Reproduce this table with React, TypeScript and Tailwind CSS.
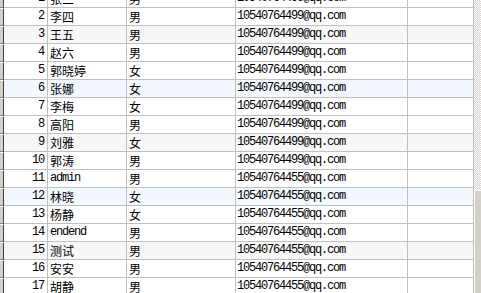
import React from "react";

const rows: [number, string, string, string][] = [
  [1, "张三", "男", "10540764499@qq.com"],
  [2, "李四", "男", "10540764499@qq.com"],
  [3, "王五", "男", "10540764499@qq.com"],
  [4, "赵六", "男", "10540764499@qq.com"],
  [5, "郭晓婷", "女", "10540764499@qq.com"],
  [6, "张娜", "女", "10540764499@qq.com"],
  [7, "李梅", "女", "10540764499@qq.com"],
  [8, "高阳", "男", "10540764499@qq.com"],
  [9, "刘雅", "女", "10540764499@qq.com"],
  [10, "郭涛", "男", "10540764499@qq.com"],
  [11, "admin", "男", "10540764455@qq.com"],
  [12, "林晓", "女", "10540764455@qq.com"],
  [13, "杨静", "女", "10540764455@qq.com"],
  [14, "endend", "男", "10540764455@qq.com"],
  [15, "测试", "男", "10540764455@qq.com"],
  [16, "安安", "男", "10540764455@qq.com"],
  [17, "胡静", "男", "10540764455@qq.com"],
];

const cjk = "font-['Noto_Sans_CJK_SC',sans-serif]";
const mono = "font-['Liberation_Mono','DejaVu_Sans_Mono',monospace]";

function rowBg(n: number) {
  if (n % 6 === 3) return "bg-[#f7f7f7]";
  if (n % 6 === 0) return "bg-[#f2f8fe]";
  return "bg-white";
}

export default function App() {
  return (
    <div className="w-[481px] h-[293px] overflow-hidden bg-white flex text-black">
      <div className="flex-1 flex flex-col -mt-[10px]">
        {rows.map(([n, name, sex, email]) => {
          const ascii = /^[a-z]+$/.test(name);
          return (
            <div key={n} className={`flex h-[18px] shrink-0 ${rowBg(n)}`}>
              <div className="w-[4px] h-[18px] bg-[#d4d0c8] border-t border-t-white border-b border-b-[#808080] border-r border-r-[#404040]" />
              <div className={`w-[44px] h-[18px] border-r border-b border-[#c0c0c0] text-right pr-[3px] text-[12px] leading-[17px] tracking-[-1.2px] ${mono}`}>
                {n}
              </div>
              <div
                className={`w-[79px] h-[18px] border-r border-b border-[#c0c0c0] pl-[2px] leading-[17px] ${
                  ascii ? `text-[12px] tracking-[-1.2px] ${mono}` : `text-[12px] ${cjk}`
                }`}
              >
                {name}
              </div>
              <div className={`w-[109px] h-[18px] border-r border-b border-[#c0c0c0] pl-[2px] text-[12px] leading-[17px] ${cjk}`}>
                {sex}
              </div>
              <div className={`w-[172px] h-[18px] border-r border-b border-[#c0c0c0] pl-[1px] text-[12px] leading-[17px] tracking-[-1.2px] ${mono}`}>
                {email}
              </div>
              <div className="w-[66px] h-[18px] border-r border-b border-[#c0c0c0]" />
            </div>
          );
        })}
      </div>
      <div className="w-[7px] h-[293px] flex flex-col bg-[repeating-conic-gradient(#d4d0c8_0_25%,#ffffff_0_50%)] bg-[length:2px_2px]">
        <div className="h-[190px] shrink-0" />
        <div className="flex-1 bg-[#d4d0c8] border-l border-t border-white" />
      </div>
    </div>
  );
}
